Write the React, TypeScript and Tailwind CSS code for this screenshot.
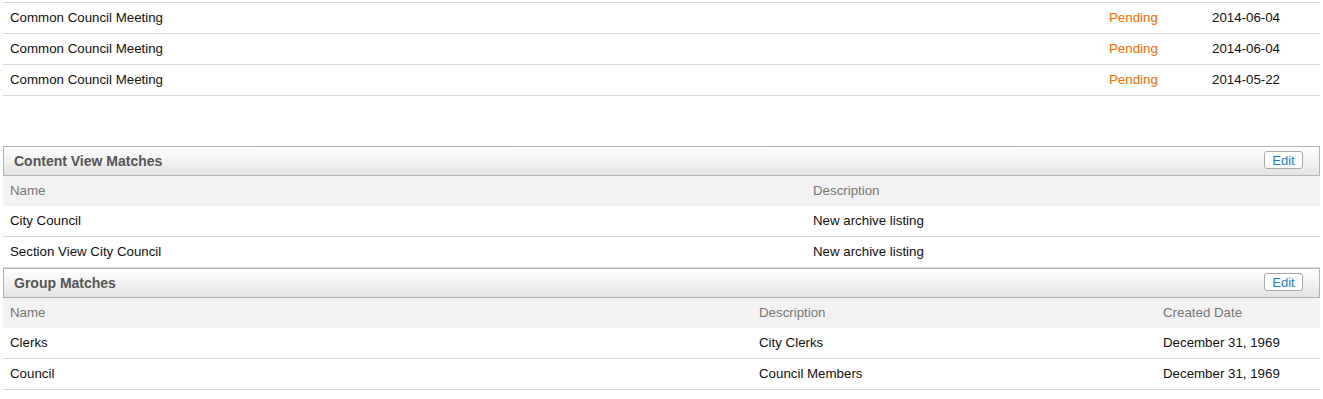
const font = { fontFamily: '"Liberation Sans", Arial, Helvetica, sans-serif' };

const meetings = [
  { name: 'Common Council Meeting', status: 'Pending', date: '2014-06-04' },
  { name: 'Common Council Meeting', status: 'Pending', date: '2014-06-04' },
  { name: 'Common Council Meeting', status: 'Pending', date: '2014-05-22' },
];

const contentViews = [
  { name: 'City Council', description: 'New archive listing' },
  { name: 'Section View City Council', description: 'New archive listing' },
];

const groups = [
  { name: 'Clerks', description: 'City Clerks', created: 'December 31, 1969' },
  { name: 'Council', description: 'Council Members', created: 'December 31, 1969' },
];

function PanelHeader({ title }: { title: string }) {
  return (
    <div className="flex h-[30px] items-center justify-between border border-[#b4b4b4] bg-gradient-to-b from-white to-[#e4e4e4] pl-[10px] pr-[16px]">
      <h2 className="text-[14px] font-bold text-[#555]">{title}</h2>
      <button className="-mt-[2px] h-[18px] w-[39px] rounded-[3px] border border-[#a9a9a9] bg-white text-[13px] leading-none text-[#1a7fd1]">
        Edit
      </button>
    </div>
  );
}

export default function App() {
  return (
    <div className="bg-white px-[3px] pt-[2px] text-[13.3px] text-[#111]" style={font}>
      {/* agenda items */}
      <div className="border-t border-[#d8d8d8]">
        {meetings.map((m, i) => (
          <div key={i} className="grid h-[31px] grid-cols-[1099px_103px_1fr] items-center border-b border-[#d8d8d8]">
            <span className="pl-[7px]">{m.name}</span>
            <span className="pl-[7px] text-[#ff6a00]">{m.status}</span>
            <span className="pl-[7px]">{m.date}</span>
          </div>
        ))}
      </div>

      <section className="mt-[50px]">
        <PanelHeader title="Content View Matches" />
        <div className="grid h-[30px] grid-cols-[803px_1fr] items-center bg-[#f2f2f2] text-[#777]">
          <span className="pl-[7px]">Name</span>
          <span className="pl-[7px]">Description</span>
        </div>
        {contentViews.map((c, i) => (
          <div key={i} className="grid h-[31px] grid-cols-[803px_1fr] items-center border-b border-[#d8d8d8]">
            <span className="pl-[7px]">{c.name}</span>
            <span className="pl-[7px]">{c.description}</span>
          </div>
        ))}
      </section>

      <section>
        <PanelHeader title="Group Matches" />
        <div className="grid h-[30px] grid-cols-[749px_404px_1fr] items-center bg-[#f2f2f2] text-[#777]">
          <span className="pl-[7px]">Name</span>
          <span className="pl-[7px]">Description</span>
          <span className="pl-[7px]">Created Date</span>
        </div>
        {groups.map((g, i) => (
          <div key={i} className="grid h-[31px] grid-cols-[749px_404px_1fr] items-center border-b border-[#d8d8d8]">
            <span className="pl-[7px]">{g.name}</span>
            <span className="pl-[7px]">{g.description}</span>
            <span className="pl-[7px]">{g.created}</span>
          </div>
        ))}
      </section>
    </div>
  );
}
